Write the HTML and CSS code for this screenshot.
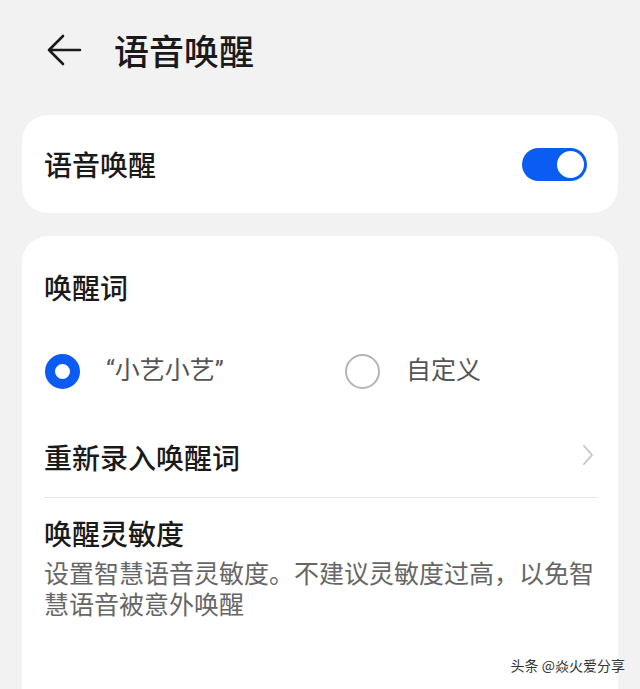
FILE: index.html
```html
<!DOCTYPE html>
<html lang="zh-CN">
<head>
<meta charset="utf-8">
<link rel="stylesheet" href="styles.css">
</head>
<body>
<div class="page">
  <header class="topbar">
    <svg class="back" width="36" height="32" viewBox="0 0 36 32">
      <path d="M34 16H3M17 2L3 16l14 14" fill="none" stroke="#1a1a1a" stroke-width="2.6" stroke-linecap="round" stroke-linejoin="round"/>
    </svg>
    <h1 class="title">语音唤醒</h1>
  </header>

  <section class="card card-switch">
    <span class="row-label">语音唤醒</span>
    <span class="toggle"><span class="knob"></span></span>
  </section>

  <section class="card card-main">
    <div class="section-title">唤醒词</div>
    <div class="radio-row">
      <label class="radio-item">
        <span class="radio radio-on"></span>
        <span class="radio-text">“小艺小艺”</span>
      </label>
      <label class="radio-item">
        <span class="radio"></span>
        <span class="radio-text">自定义</span>
      </label>
    </div>
    <div class="nav-row">
      <span class="row-label">重新录入唤醒词</span>
      <svg class="chev" width="12" height="22" viewBox="0 0 12 22">
        <path d="M2 2l8 9-8 9" fill="none" stroke="#c4c4c4" stroke-width="1.8" stroke-linecap="round" stroke-linejoin="round"/>
      </svg>
    </div>
    <div class="divider"></div>
    <div class="sens">
      <div class="row-label">唤醒灵敏度</div>
      <p class="desc">设置智慧语音灵敏度。不建议灵敏度过高，以免智慧语音被意外唤醒</p>
    </div>
  </section>

  <div class="watermark">头条 @焱火爱分享</div>
</div>
</body>
</html>
```

FILE: styles.css
```css
html, body {
  margin: 0;
  padding: 0;
  background: #f2f2f2;
}
body {
  font-family: "Roboto", "Noto Sans CJK SC", sans-serif;
  color: #1a1a1a;
  width: 640px;
  height: 689px;
  overflow: hidden;
}
.page {
  position: relative;
  height: 689px;
  overflow: hidden;
}
.topbar {
  height: 115px;
  display: flex;
  align-items: flex-start;
  padding-left: 46px;
  box-sizing: border-box;
}
.back {
  margin-top: 34px;
  display: block;
}
.title {
  margin: 29px 0 0 32px;
  font-family: "Noto Sans CJK SC", sans-serif;
  font-size: 35px;
  font-weight: 500;
  line-height: 42px;
  color: #1a1a1a;
}
.card {
  background: #fff;
  margin: 0 22px;
  border-radius: 26px;
}
.card-switch {
  height: 98px;
  display: flex;
  align-items: center;
  justify-content: space-between;
  padding: 0 31px 0 22px;
}
.row-label {
  font-family: "Noto Sans CJK SC", sans-serif;
  font-size: 28px;
  line-height: 36px;
  font-weight: 500;
  color: #1a1a1a;
}
.toggle {
  width: 65px;
  height: 33px;
  border-radius: 17px;
  background: #0b5cf2;
  display: flex;
  align-items: center;
  justify-content: flex-end;
  padding: 0 1px;
  box-sizing: border-box;
}
.knob {
  width: 31px;
  height: 31px;
  border-radius: 50%;
  background: #fff;
  border: 2px solid #0b5cf2;
  box-sizing: border-box;
}
.card-main {
  margin-top: 23px;
  height: 520px;
  padding: 0 20px 0 22px;
}
.section-title {
  font-family: "Noto Sans CJK SC", sans-serif;
  font-size: 28px;
  line-height: 36px;
  font-weight: 500;
  padding-top: 33px;
  height: 69px;
}
.radio-row {
  display: flex;
  align-items: center;
  height: 66px;
}
.radio-item {
  display: flex;
  align-items: center;
  gap: 26px;
}
.radio-item:first-child {
  width: 300px;
  padding-left: 1px;
}
.radio {
  width: 35px;
  height: 35px;
  border-radius: 50%;
  border: 2px solid #b4b4b4;
  box-sizing: border-box;
  flex: none;
}
.radio-on {
  border: 10px solid #0b5cf2;
}
.radio-text {
  font-size: 25px;
  line-height: 34px;
  color: #555;
}
.nav-row {
  display: flex;
  align-items: center;
  justify-content: space-between;
  height: 80px;
  margin-top: 13px;
  padding-right: 4px;
}
.chev {
  display: block;
  margin-top: -4px;
}
.divider {
  height: 1px;
  background: #e6e6e6;
}
.sens {
  padding-top: 17px;
}
.desc {
  margin: 6px 0 0;
  font-family: "Noto Sans CJK SC", sans-serif;
  font-size: 25px;
  line-height: 31px;
  color: #666;
}
.watermark {
  position: absolute;
  right: 15px;
  top: 654px;
  font-family: "Noto Sans CJK SC", sans-serif;
  font-size: 14px;
  line-height: 22px;
  color: #333;
  text-shadow: 0 0 2px #fff;
}
```
